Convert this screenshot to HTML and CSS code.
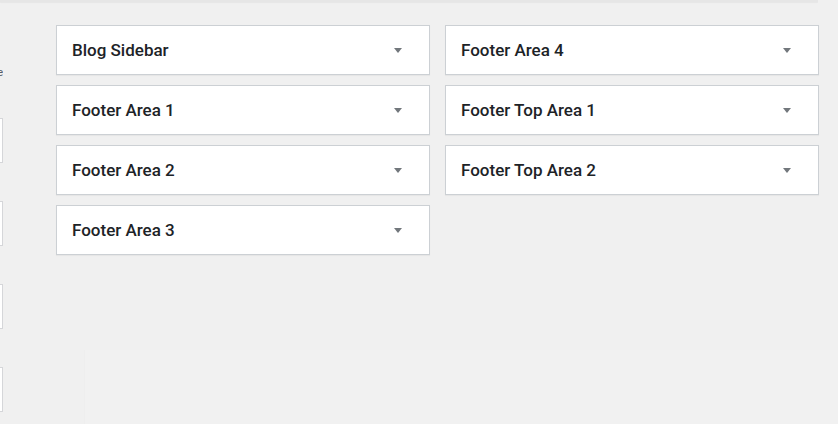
FILE: index.html
```html
<!DOCTYPE html>
<html lang="en">
<head>
<meta charset="UTF-8">
<meta name="viewport" content="width=device-width, initial-scale=1.0">
<title>Widgets</title>
<link rel="stylesheet" href="styles.css">
</head>
<body>
<div class="top-edge"></div>
<div class="page">
  <div class="side">
    <p class="side-note">Inactive widgets are here</p>
    <div class="side-box"></div>
    <div class="side-box"></div>
    <div class="side-box"></div>
    <div class="side-box"></div>
  </div>
  <div class="main">
    <div class="areas">
      <div class="column">
        <div class="widget"><h3>Blog Sidebar</h3><span class="arrow"></span></div>
        <div class="widget"><h3>Footer Area 1</h3><span class="arrow"></span></div>
        <div class="widget"><h3>Footer Area 2</h3><span class="arrow"></span></div>
        <div class="widget"><h3>Footer Area 3</h3><span class="arrow"></span></div>
      </div>
      <div class="column">
        <div class="widget"><h3>Footer Area 4</h3><span class="arrow"></span></div>
        <div class="widget"><h3>Footer Top Area 1</h3><span class="arrow"></span></div>
        <div class="widget"><h3>Footer Top Area 2</h3><span class="arrow"></span></div>
      </div>
    </div>
    <div class="inactive"></div>
  </div>
</div>
</body>
</html>
```

FILE: styles.css
```css
html, body {
  height: 100%;
}

body {
  margin: 0;
  background-color: #f0f0f0;
  font-family: Roboto, "Liberation Sans", sans-serif;
  color: #23282d;
  overflow: hidden;
}

.top-edge {
  width: 818px;
  height: 2px;
  background-color: #e6e6e6;
  box-shadow: 0 1px 1px rgba(0, 0, 0, 0.04);
}

.page {
  display: flex;
  height: 422px;
}

.side {
  width: 3px;
  overflow: hidden;
  flex-shrink: 0;
}

.side-note {
  margin: 64px 0 0 -150px;
  width: 153px;
  text-align: right;
  font-size: 11px;
  line-height: 14px;
  color: #555d66;
  white-space: nowrap;
}

.side-box {
  margin-left: -200px;
  width: 201px;
  height: 43px;
  background-color: #fff;
  border: 1px solid #d5d6d9;
  margin-top: 38px;
}

.side-note + .side-box {
  margin-top: 38px;
}

.main {
  flex: 1;
  padding-left: 53px;
  padding-top: 23px;
}

.areas {
  display: flex;
  gap: 15px;
}

.column {
  width: 374px;
  display: flex;
  flex-direction: column;
  gap: 10px;
}

.widget {
  display: flex;
  align-items: center;
  justify-content: space-between;
  height: 48px;
  padding: 0 27px 0 15px;
  background-color: #fff;
  border: 1px solid #ccd0d4;
  box-shadow: 0 1px 1px rgba(0, 0, 0, 0.04);
}

.widget h3 {
  margin: 0;
  font-size: 17px;
  font-weight: 500;
  color: #1d2327;
}

.arrow {
  width: 0;
  height: 0;
  border-left: 4px solid transparent;
  border-right: 4px solid transparent;
  border-top: 5px solid #72777c;
}

.inactive {
  margin: 95px 0 0 28px;
  height: 80px;
  background-color: #f1f1f1;
  border-left: 1px solid #eeeeee;
}
```
